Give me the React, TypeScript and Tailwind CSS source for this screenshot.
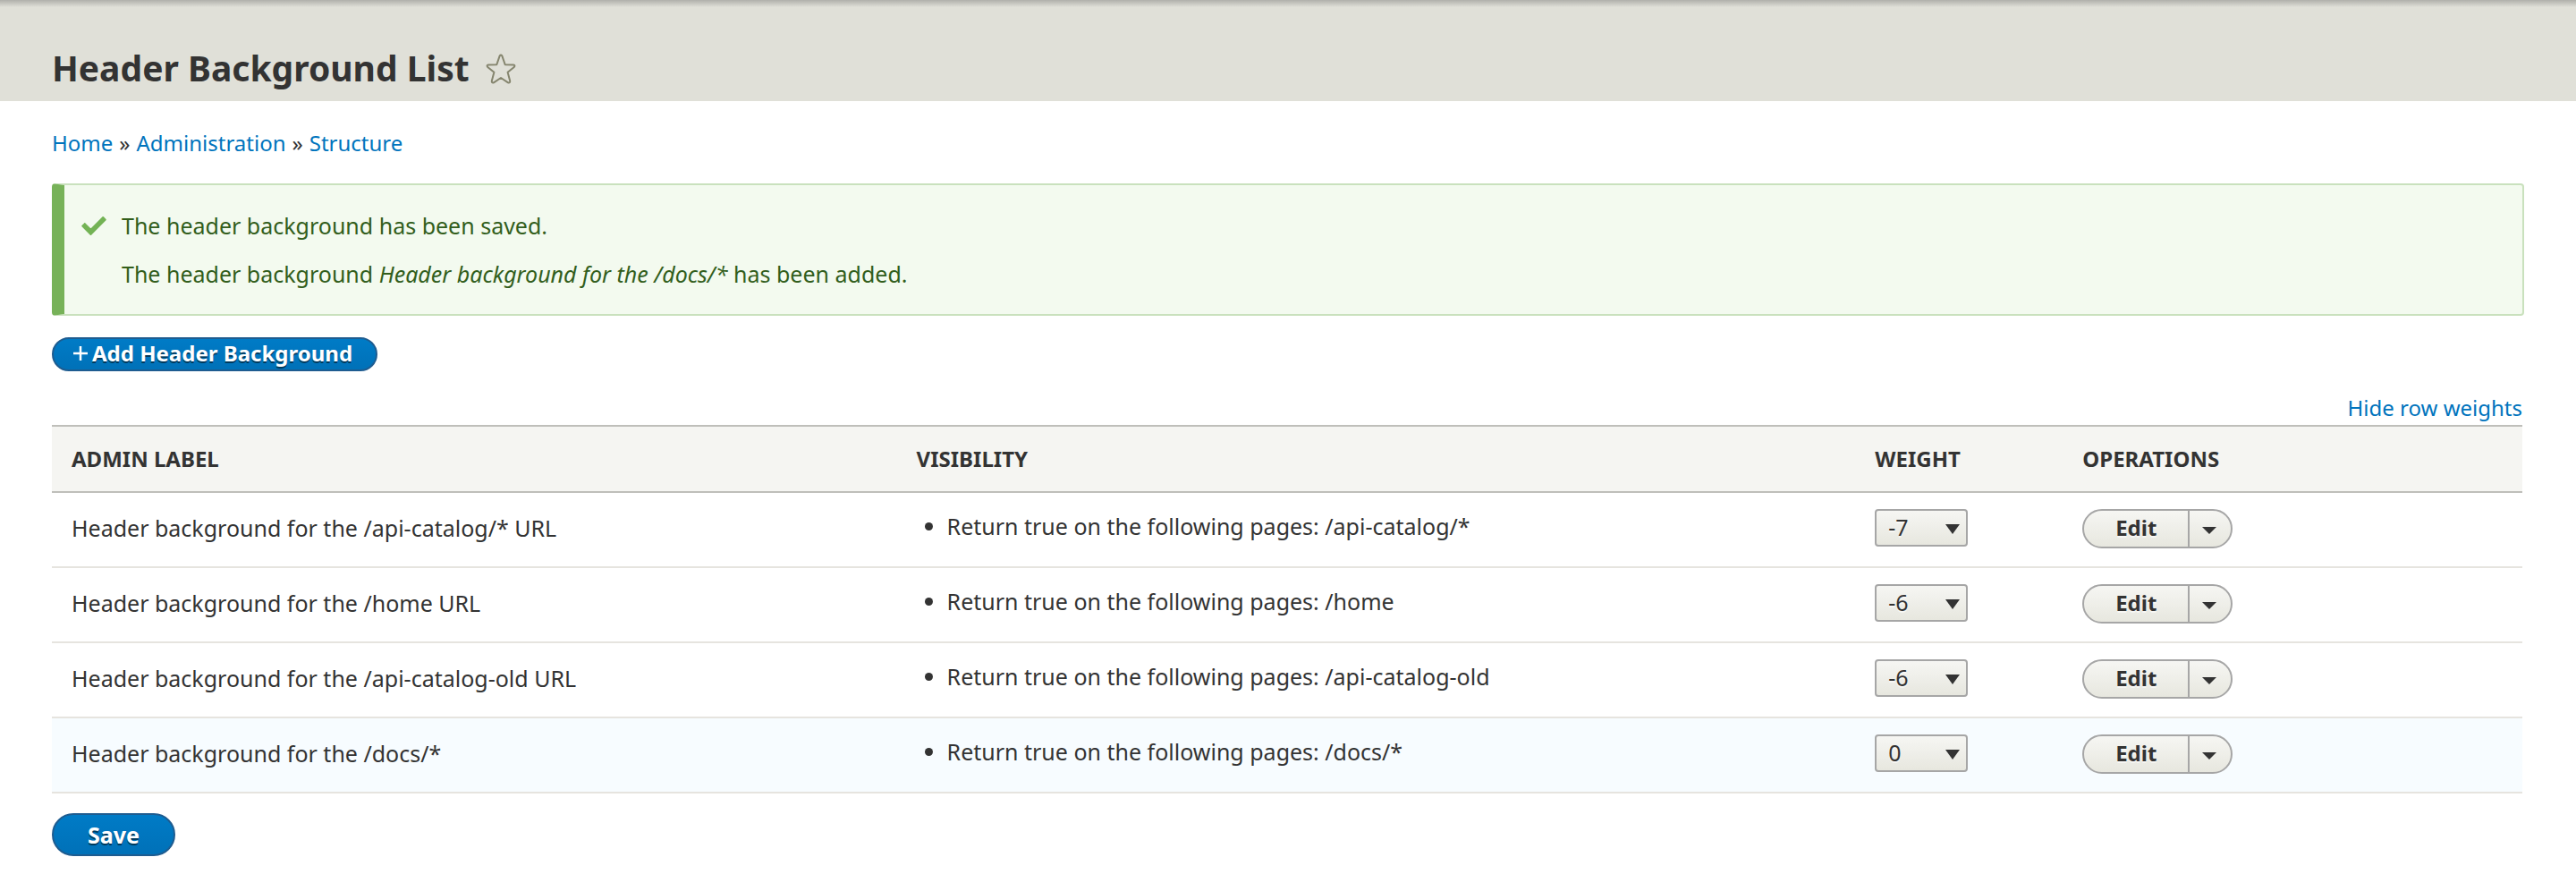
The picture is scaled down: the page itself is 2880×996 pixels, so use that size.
const rows = [
  { id: 'api-catalog', label: 'Header background for the /api-catalog/* URL', page: '/api-catalog/*', weight: -7, changed: false },
  { id: 'home', label: 'Header background for the /home URL', page: '/home', weight: -6, changed: false },
  { id: 'api-catalog-old', label: 'Header background for the /api-catalog-old URL', page: '/api-catalog-old', weight: -6, changed: false },
  { id: 'docs', label: 'Header background for the /docs/*', page: '/docs/*', weight: 0, changed: true },
];

const weights = Array.from({ length: 21 }, (_, i) => i - 10);

function Star() {
  return (
    <svg viewBox="0 0 34 34" className="size-[34px]" fill="none" stroke="#85856e" strokeWidth="2" strokeLinejoin="round" aria-hidden="true">
      <path d="M15.600 2.600 Q17 0.600 18.400 2.600 L21.700 12.300 L31 12.600 Q33.400 13 31.800 15 L24.600 20.800 L27.200 30.600 Q27.400 33.200 25 32.300 L17 27 L9 32.300 Q6.600 33.200 6.800 30.600 L9.400 20.800 L2.200 15 Q0.600 13 3 12.600 L12.300 12.300 Z" />
    </svg>
  );
}

function WeightSelect({ label, value }: { label: string; value: number }) {
  return (
    <div className="relative w-[104px]">
      <select
        aria-label={`Weight for ${label}`}
        defaultValue={value}
        className="block h-[42px] w-full appearance-none rounded-[4px] border-2 border-[#a6a6a6] bg-linear-to-b from-[#f6f6f3] to-[#e7e7df] pb-[2px] pl-[13px] text-[25px] leading-[36px] text-[#333] [text-shadow:0_2px_#ffffff99]"
      >
        {weights.map((w) => (
          <option key={w} value={w}>{w}</option>
        ))}
      </select>
      <svg viewBox="0 0 16 11" className="pointer-events-none absolute top-[17px] right-[9px] h-[11px] w-4" fill="#333" aria-hidden="true">
        <path d="M0 0h16L8 11z" />
      </svg>
    </div>
  );
}

function EditButton() {
  return (
    <div className="flex h-11 w-[168px] overflow-hidden rounded-full border-2 border-[#a6a6a6] bg-linear-to-b from-[#f6f6f3] to-[#e7e7df]">
      <button type="button" className="flex-1 pb-[2px] text-2xl leading-[38px] font-bold text-[#333] [text-shadow:0_2px_#ffffff99]">
        Edit
      </button>
      <button type="button" aria-label="List additional actions" className="flex w-12 items-center justify-center border-l-2 border-[#a6a6a6] pt-1 pr-[2px]">
        <svg viewBox="0 0 16 8" className="h-2 w-4" fill="#333" aria-hidden="true">
          <path d="M0 0h16L8 8z" />
        </svg>
      </button>
    </div>
  );
}

export default function App() {
  return (
    <div className="min-h-screen bg-white font-['Noto_Sans','Open_Sans',sans-serif] text-[25px] leading-[38px] text-[#333]">
      <header className="bg-[#e0e0d8]">
        <div className="h-2 bg-linear-to-b from-[#b0b0ab] to-[#e0e0d8]" />
        <div className="flex h-[105px] items-center gap-[18px] px-[58px] pt-8">
          <h1 className="pb-[2px] text-[39px] leading-[48px] font-bold">Header Background List</h1>
          <button type="button" aria-label="Add to shortcuts"><Star /></button>
        </div>
      </header>

      <main className="px-[58px] pt-7">
        <nav aria-label="Breadcrumb" className="flex gap-[7px] text-2xl leading-[38px]">
          <a href="#home" className="text-[#0074bd]">Home</a>
          <span>»</span>
          <a href="#administration" className="text-[#0074bd]">Administration</a>
          <span>»</span>
          <a href="#structure" className="text-[#0074bd]">Structure</a>
        </nav>

        <div role="status" className="mt-[26px] flex h-[148px] gap-4 rounded-[4px] border-2 border-l-[14px] border-[#c9e1bd] border-l-[#77b259] bg-[#f3faef] pt-[26px] pl-[18px] text-[#325e1c]">
          <svg viewBox="0 0 16 16" className="mt-1 size-[30px]" fill="#73b355" aria-hidden="true">
            <path d="M6.464 13.676c-.194.194-.513.194-.707 0l-4.960-4.955c-.194-.193-.194-.513 0-.707l1.405-1.407c.194-.195.512-.195.707 0l2.849 2.848c.194.193.513.193.707 0l6.629-6.626c.195-.194.514-.194.707 0l1.404 1.404c.193.194.193.513 0 .707l-8.741 8.736z" />
          </svg>
          <div className="flex flex-col gap-4">
            <p>The header background has been saved.</p>
            <p>The header background <em>Header background for the /docs/*</em> has been added.</p>
          </div>
        </div>

        <a href="#add" className="mt-6 flex h-[38px] w-fit items-center gap-[5px] rounded-full border-2 border-[#1e5c90] bg-linear-to-b from-[#007bc6] to-[#0071b8] pr-[26px] pb-[2px] pl-[22px] text-2xl font-bold text-white [text-shadow:0_2px_#00000080]">
          <svg viewBox="0 0 16 16" className="size-4" fill="none" stroke="#fff" strokeWidth="2.500" aria-hidden="true">
            <path d="M8 0v16M0 8h16" />
          </svg>
          Add Header Background
        </a>

        <div className="pr-[2px]">
          <div className="mt-[22px] flex justify-end">
            <button type="button" className="text-2xl leading-[38px] text-[#0074bd]">Hide row weights</button>
          </div>

          <table className="w-full table-fixed border-collapse text-left">
            <thead>
              <tr className="h-[74px] border-y-2 border-[#bfbfba] bg-[#f5f5f2] text-2xl uppercase">
                <th scope="col" className="w-[34.2%] pl-[22px] font-bold">Admin label</th>
                <th scope="col" className="w-[38.8%] pl-[22px] font-bold">Visibility</th>
                <th scope="col" className="w-[8.4%] pl-[22px] font-bold">Weight</th>
                <th scope="col" className="w-[18.6%] pl-[22px] font-bold">Operations</th>
              </tr>
            </thead>
            <tbody>
              {rows.map((row) => (
                <tr key={row.id} className={row.changed ? 'h-[84px] border-b-2 border-[#e6e4df] bg-[#f7fcff]' : 'h-[84px] border-b-2 border-[#e6e4df]'}>
                  <td className="pb-1 pl-[22px]">{row.label}</td>
                  <td className="pb-2 pl-[22px]">
                    <ul className="list-disc pl-[34px]">
                      <li>Return true on the following pages: {row.page}</li>
                    </ul>
                  </td>
                  <td className="pb-1 pl-[22px]"><WeightSelect label={row.label} value={row.weight} /></td>
                  <td className="pb-[2px] pl-[22px]"><EditButton /></td>
                </tr>
              ))}
            </tbody>
          </table>
        </div>

        <button type="submit" className="mt-[22px] h-12 w-[138px] rounded-full border-2 border-[#1e5c90] bg-linear-to-b from-[#007bc6] to-[#0071b8] text-[25px] font-bold text-white [text-shadow:0_2px_#00000080]">
          Save
        </button>
      </main>
    </div>
  );
}
